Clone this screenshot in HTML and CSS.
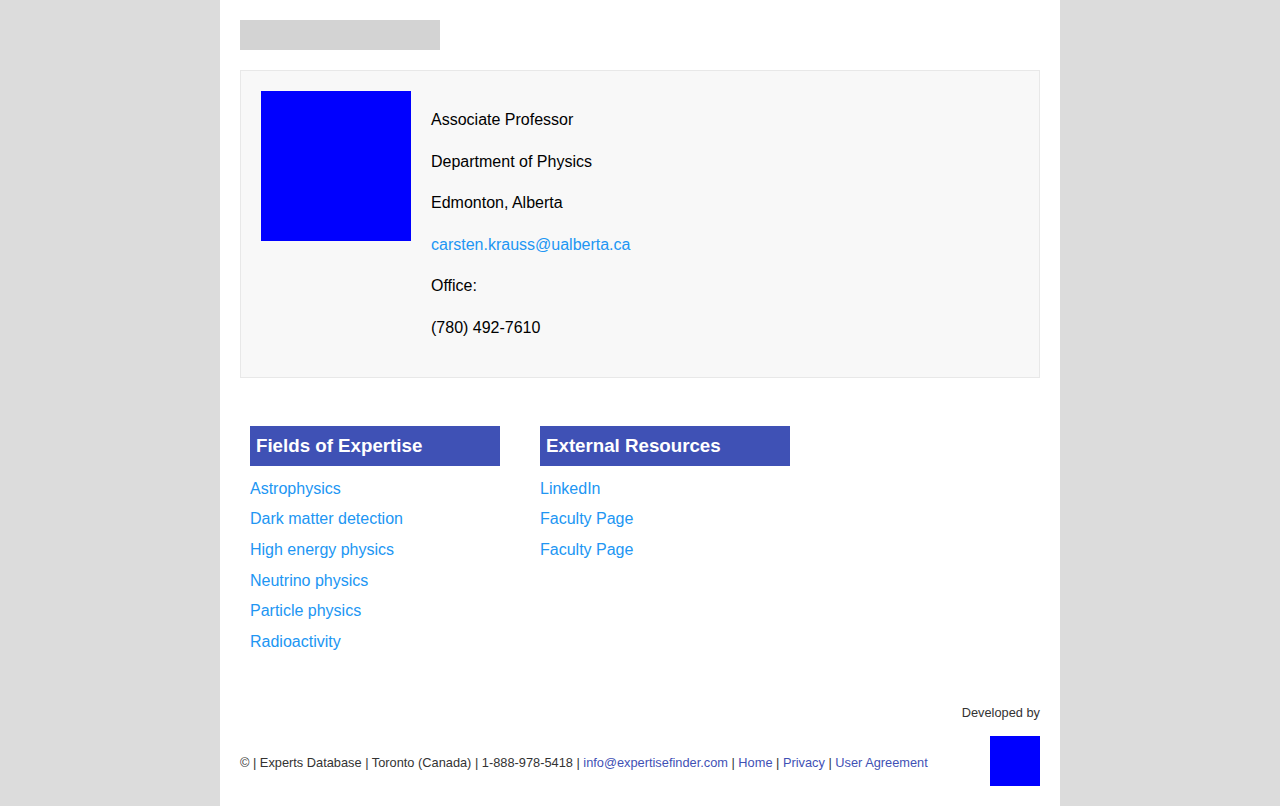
FILE: index.html
```html
<!DOCTYPE html>
<html>
<head>
<meta charset="utf-8">
<link rel="stylesheet" href="styles.css">
</head>
<body>
<div class="page">
  <div class="logo-bar"></div>
  <div class="profile">
    <div class="photo"></div>
    <div class="info">
      <p>Associate Professor</p>
      <p>Department of Physics</p>
      <p>Edmonton, Alberta</p>
      <p><a href="#" class="link">carsten.krauss@ualberta.ca</a></p>
      <p>Office:</p>
      <p>(780) 492-7610</p>
    </div>
  </div>
  <div class="sections">
    <div class="section">
      <h3 class="section-title">Fields of Expertise</h3>
      <ul class="section-list">
        <li><a href="#" class="link">Astrophysics</a></li>
        <li><a href="#" class="link">Dark matter detection</a></li>
        <li><a href="#" class="link">High energy physics</a></li>
        <li><a href="#" class="link">Neutrino physics</a></li>
        <li><a href="#" class="link">Particle physics</a></li>
        <li><a href="#" class="link">Radioactivity</a></li>
      </ul>
    </div>
    <div class="section">
      <h3 class="section-title">External Resources</h3>
      <ul class="section-list">
        <li><a href="#" class="link">LinkedIn</a></li>
        <li><a href="#" class="link">Faculty Page</a></li>
        <li><a href="#" class="link">Faculty Page</a></li>
      </ul>
    </div>
  </div>
  <footer class="footer">
    <div class="dev">Developed by</div>
    <div class="footer-row">
      <div class="footer-text">© | Experts Database | Toronto (Canada) | 1-888-978-5418 | <a href="#">info@expertisefinder.com</a> | <a href="#">Home</a> | <a href="#">Privacy</a> | <a href="#">User Agreement</a></div>
      <div class="dev-logo"></div>
    </div>
  </footer>
</div>
</body>
</html>
```

FILE: styles.css
```css
html, body {
  margin: 0;
  padding: 0;
}
body {
  background: #dcdcdc;
  font-family: "Liberation Sans", Arial, sans-serif;
  color: #000;
}
.page {
  width: 840px;
  margin: 0 auto;
  background: #fff;
  padding: 20px;
  min-height: 806px;
  box-sizing: border-box;
}
.logo-bar {
  width: 200px;
  height: 30px;
  background: #d3d3d3;
}
.profile {
  margin-top: 20px;
  background: #f8f8f8;
  border: 1px solid #e8e8e8;
  padding: 20px;
  display: flex;
  gap: 20px;
  align-items: flex-start;
}
.photo {
  width: 150px;
  height: 150px;
  background: #0000ff;
  flex: none;
}
.info {
  font-size: 16px;
  line-height: 1.6;
}
.info p {
  margin: 16px 0;
}
.link {
  color: #2196f3;
  text-decoration: none;
}
.sections {
  display: flex;
  gap: 40px;
  margin-top: 48px;
  padding-left: 10px;
}
.section {
  width: 250px;
}
.section-title {
  margin: 0;
  height: 40px;
  line-height: 40px;
  background: #3f51b5;
  color: #fff;
  font-size: 18.72px;
  font-weight: bold;
  padding-left: 6px;
}
.section-list {
  list-style: none;
  margin: 8px 0 0;
  padding: 0;
  font-size: 16px;
}
.section-list li {
  line-height: 30.7px;
}
.footer {
  margin-top: 47px;
  font-size: 12.8px;
  color: #333;
}
.dev {
  text-align: right;
  line-height: 15px;
}
.footer-row {
  display: flex;
  justify-content: space-between;
  align-items: center;
  margin-top: 16px;
}
.footer-text {
  line-height: 15px;
  padding-top: 4px;
}
.footer-text a {
  color: #3f51b5;
  text-decoration: none;
}
.dev-logo {
  width: 50px;
  height: 50px;
  background: #0000ff;
  flex: none;
}
```
